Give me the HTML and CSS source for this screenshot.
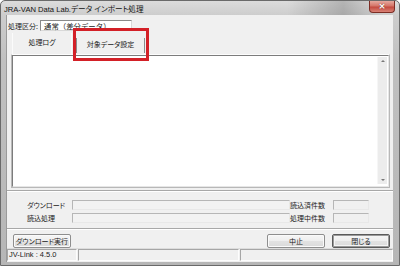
FILE: index.html
```html
<!DOCTYPE html>
<html>

<head>
    <meta charset="UTF-8">
    <title>JRA-VAN Data Lab.データ インポート処理</title>
    <link rel="stylesheet" href="styles.css">
</head>

<body>
    <div class="window">
        <div class="titlebar">
            <span class="title">JRA-VAN Data Lab.データ インポート処理</span>
            <div class="close"><span>×</span></div>
        </div>

        <div class="client">
            <div class="kubun">
                <span class="label">処理区分:</span>
                <div class="field">通常（差分データ）</div>
            </div>

            <div class="tabs">
                <div class="tab selected">処理ログ</div>
                <div class="tab">対象データ設定</div>
                <div class="mark"></div>
            </div>

            <div class="panel">
                <div class="log">
                    <div class="scrollbar">
                        <span class="arrow up"></span>
                        <span class="arrow down"></span>
                    </div>
                </div>
            </div>

            <div class="sep"></div>

            <div class="progress">
                <div class="prow">
                    <span class="plabel">ダウンロード</span>
                    <div class="bar"></div>
                    <span class="clabel">読込済件数</span>
                    <div class="count"></div>
                </div>
                <div class="prow">
                    <span class="plabel">読込処理</span>
                    <div class="bar"></div>
                    <span class="clabel">処理中件数</span>
                    <div class="count"></div>
                </div>
            </div>

            <div class="sep"></div>

            <div class="buttons">
                <button class="btn">ダウンロード実行</button>
                <span class="spacer"></span>
                <button class="btn">中止</button>
                <button class="btn default">閉じる</button>
            </div>

            <div class="statusbar">
                <div class="cell version">JV-Link : 4.5.0</div>
                <div class="cell mid"></div>
                <div class="cell rest"></div>
            </div>
        </div>
    </div>
</body>

</html>
```

FILE: styles.css
```css
html, body {
    margin: 0;
    padding: 0;
    width: 400px;
    height: 266px;
    overflow: hidden;
    background: #ffffff;
}

body {
    font-family: "Noto Sans CJK JP", "Liberation Sans", sans-serif;
    font-size: 7px;
    color: #1a1a1a;
    font-feature-settings: "palt";
}

.window {
    box-sizing: border-box;
    width: 400px;
    height: 266px;
    border: 1px solid #6a6a6a;
    border-radius: 5px 5px 0 0;
    padding: 0 6px 3px 5px;
    display: flex;
    flex-direction: column;
    background: linear-gradient(to bottom, #dcdcdc 0px, #cdcdcd 14px, #c0c0c0 60px, #b6b6b6 100%);
}

/* title bar */
.titlebar {
    height: 14px;
    display: flex;
    align-items: center;
    background: linear-gradient(to right, rgba(0, 0, 0, 0) 72%, rgba(0, 0, 0, 0.18) 86%, rgba(0, 0, 0, 0) 96%);
    margin: 0 -6px 0 -5px;
    padding: 0 6px 0 3px;
}

.title {
    font-family: "Liberation Sans", "Noto Sans CJK JP", sans-serif;
    font-size: 7.6px;
    color: #111;
    white-space: nowrap;
}

.close {
    margin-left: auto;
    margin-right: -2px;
    align-self: flex-start;
    width: 26px;
    height: 12px;
    box-sizing: border-box;
    border: 1px solid #7d2d25;
    border-top: none;
    border-radius: 0 0 4px 4px;
    background: linear-gradient(to bottom, #e6a99f 0%, #d47468 45%, #c44a3f 55%, #d98276 100%);
    display: flex;
    align-items: center;
    justify-content: center;
}

.close span {
    font-family: "DejaVu Sans", sans-serif;
    font-size: 9px;
    font-weight: bold;
    line-height: 1;
    color: #fff;
    text-shadow: 0 0 1px #5a1a14;
}

/* client area */
.client {
    flex: 1;
    background: #f0f0f0;
    border-left: 1px solid #9a9a9a;
    display: flex;
    flex-direction: column;
}

.kubun {
    display: flex;
    align-items: center;
    margin-top: 5px;
    height: 11px;
}

.kubun .label {
    width: 32px;
    flex: none;
    padding-left: 1px;
    white-space: nowrap;
}

.field {
    width: 92px;
    height: 11px;
    box-sizing: border-box;
    background: #fff;
    border: 1px solid #d8d8d8;
    border-top-color: #8a8a8a;
    border-left-color: #8a8a8a;
    padding-left: 3px;
    line-height: 9px;
    font-size: 7.4px;
    font-feature-settings: normal;
    white-space: nowrap;
}

/* tabs */
.tabs {
    position: relative;
    display: flex;
    align-items: flex-end;
    height: 22px;
    margin-top: 1px;
    padding-left: 5px;
}

.tab {
    height: 15px;
    width: 69px;
    box-sizing: border-box;
    text-align: center;
    line-height: 13px;
    white-space: nowrap;
    border-left: 1px solid #8c8c8c;
    border-right: 1px solid #8c8c8c;
    margin-bottom: 1px;
}

.tab.selected {
    height: 21px;
    width: 60px;
    line-height: 18px;
    border-color: #fbfbfb;
    margin-bottom: 0;
    margin-right: 4px;
}

.mark {
    position: absolute;
    left: 66px;
    top: -4px;
    width: 70px;
    height: 27px;
    border: 3px solid #d32027;
}

/* log panel */
.panel {
    height: 134px;
    margin: 0 3px 0 4px;
    border: 1px solid #b8b8b8;
    border-top-color: #fdfdfd;
    box-sizing: border-box;
}

.log {
    height: 100%;
    box-sizing: border-box;
    background: #fff;
    border: 1px solid #e6e6e6;
    border-top-color: #7c7c7c;
    border-left-color: #7c7c7c;
    display: flex;
    justify-content: flex-end;
    padding: 1px 1px 2px 0;
}

.scrollbar {
    width: 9px;
    background: #ececec;
    border-left: 1px solid #f6f6f6;
    display: flex;
    flex-direction: column;
    justify-content: space-between;
    align-items: center;
    padding: 3px 0;
}

.arrow {
    width: 0;
    height: 0;
    border-left: 2px solid transparent;
    border-right: 2px solid transparent;
}

.arrow.up {
    border-bottom: 2px solid #777;
}

.arrow.down {
    border-top: 2px solid #777;
}

.sep {
    height: 1px;
    border-top: 1px solid #a8a8a8;
    background: #fff;
    margin-top: 2px;
}

/* progress */
.progress {
    display: flex;
    flex-direction: column;
    gap: 3px;
    margin-top: 8px;
    margin-bottom: 3px;
}

.prow {
    display: flex;
    align-items: center;
    height: 10px;
    padding-left: 20px;
    padding-right: 24px;
}

.plabel {
    width: 45px;
    flex: none;
    white-space: nowrap;
}

.bar {
    flex: 1;
    height: 10px;
    box-sizing: border-box;
    border: 1px solid #e8e8e8;
    border-top-color: #b6b6b6;
    border-left-color: #b6b6b6;
    background: #f2f2f2;
}

.clabel {
    width: 43px;
    flex: none;
    text-align: right;
    padding-right: 10px;
    box-sizing: border-box;
    white-space: nowrap;
}

.count {
    width: 36px;
    flex: none;
    height: 10px;
    box-sizing: border-box;
    border: 1px solid #e8e8e8;
    border-top-color: #b6b6b6;
    border-left-color: #b6b6b6;
}

/* buttons */
.buttons {
    display: flex;
    align-items: center;
    gap: 7px;
    margin-top: 4px;
    padding: 0 3px 0 6px;
}

.spacer {
    flex: 1;
}

.btn {
    width: 58px;
    height: 14px;
    flex: none;
    padding: 0;
    margin: 0;
    font-family: "Noto Sans CJK JP", sans-serif;
    font-size: 7px;
    font-feature-settings: "palt";
    color: #1a1a1a;
    line-height: 12px;
    white-space: nowrap;
    overflow: visible;
    background: linear-gradient(to bottom, #f6f6f6 0%, #eeeeee 50%, #e2e2e2 51%, #dadada 100%);
    border: 1px solid #8e8e8e;
    border-radius: 2px;
    box-shadow: inset 0 0 0 1px #fafafa;
}

.btn.default {
    border-color: #5a5a5a;
    box-shadow: inset 0 0 0 1px #9a9a9a, inset 0 0 0 2px #f4f4f4;
}

/* status bar */
.statusbar {
    margin-top: auto;
    height: 13px;
    display: flex;
    gap: 1px;
    border-top: 1px solid #dcdcdc;
}

.cell {
    height: 12px;
    box-sizing: border-box;
    border: 1px solid #fdfdfd;
    border-top-color: #a6a6a6;
    border-left-color: #a6a6a6;
    line-height: 10px;
    white-space: nowrap;
}

.version {
    width: 70px;
    flex: none;
    font-family: "Liberation Sans", sans-serif;
    font-size: 7.5px;
    font-feature-settings: normal;
    padding-left: 1px;
}

.mid {
    width: 161px;
    flex: none;
}

.rest {
    flex: 1;
}
```
